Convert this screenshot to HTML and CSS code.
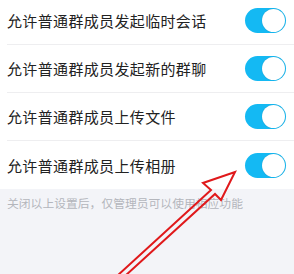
FILE: index.html
```html
<!DOCTYPE html>
<html lang="zh-CN">
<head>
<meta charset="utf-8">
<link rel="stylesheet" href="styles.css">
</head>
<body>
<div class="page">
  <div class="list">
    <div class="row"><span class="label">允许普通群成员发起临时会话</span><span class="toggle"><span class="knob"></span></span></div>
    <div class="row"><span class="label">允许普通群成员发起新的群聊</span><span class="toggle"><span class="knob"></span></span></div>
    <div class="row"><span class="label">允许普通群成员上传文件</span><span class="toggle"><span class="knob"></span></span></div>
    <div class="row last"><span class="label">允许普通群成员上传相册</span><span class="toggle"><span class="knob"></span></span></div>
  </div>
  <div class="footer">关闭以上设置后，仅管理员可以使用相应功能</div>
  <svg class="arrow" width="294" height="274" viewBox="0 0 294 274">
    <polygon points="117,276 211,190 203,183 235,172 221,200 215,194 125,276" fill="none" stroke="#e0191b" stroke-width="2" stroke-linejoin="miter"/>
  </svg>
</div>
</body>
</html>
```
FILE: styles.css
```css
html, body {
  margin: 0;
  padding: 0;
  background: #f3f4f8;
}
.page {
  position: relative;
  width: 294px;
  height: 274px;
  overflow: hidden;
  font-family: "Noto Sans CJK SC", "Noto Sans", sans-serif;
}
.list {
  background: #ffffff;
  margin-top: -3px;
}
.row {
  display: flex;
  align-items: center;
  justify-content: space-between;
  height: 47px;
  margin-left: 7px;
  padding-right: 8px;
  border-bottom: 1px solid #eeeef0;
}
.row.last {
  border-bottom: none;
  height: 48px;
}
.label {
  font-size: 15px;
  color: #222222;
  letter-spacing: 0.35px;
}
.toggle {
  position: relative;
  width: 41px;
  height: 25px;
  border-radius: 13px;
  background: #14b9f3;
  flex: none;
}
.knob {
  position: absolute;
  right: 1px;
  top: 1px;
  width: 23px;
  height: 23px;
  border-radius: 50%;
  background: #ffffff;
  box-shadow: 0 0 1px rgba(0,0,0,0.25);
}
.footer {
  padding: 5px 7px;
  font-size: 11.8px;
  color: #b4b6bc;
}
.arrow {
  position: absolute;
  left: 0;
  top: 0;
}
```
